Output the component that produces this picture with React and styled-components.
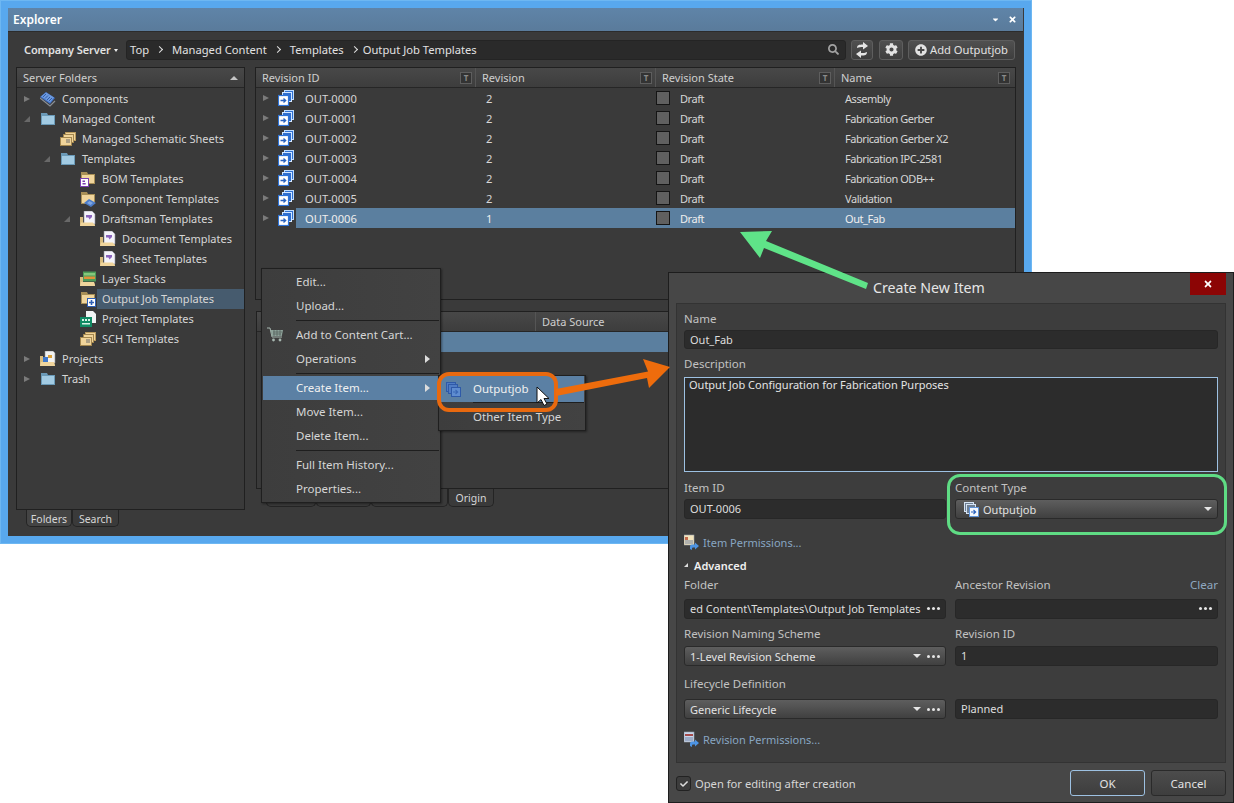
import React from 'react'
import styled, { createGlobalStyle } from 'styled-components'
import { FaCog, FaPlusCircle, FaSearch, FaCaretDown, FaTimes, FaCheck } from 'react-icons/fa'

const GlobalStyle = createGlobalStyle`
  html, body { margin: 0; padding: 0; background: #fff; }
  * { box-sizing: border-box; }
`

const UI_FONT = `"Noto Sans", "Open Sans", sans-serif`

const Stage = styled.div`
  position: relative;
  width: 1234px;
  height: 803px;
  overflow: hidden;
  font-family: ${UI_FONT};
  font-size: 11.5px;
  color: #d6d6d6;
`

/* ---------- icons ---------- */
const Svg = ({ children, size = 16 }) => (
  <svg width={size} height={size} viewBox="0 0 16 16" style={{ display: 'block', flex: 'none' }}>{children}</svg>
)

const ChipIcon = () => (
  <Svg>
    <path d="M0 6 6 1l9 6-5 6z" fill="#3f6fc4" />
    <path d="M1 5.500 6 1.500l8 5-4 5z" fill="#6d9ade" />
    <path d="M3 6l3-3M5 7.500l3-3M7 9l3-3M9 10l3-3" stroke="#2f5aa8" strokeWidth="1" />
    <path d="M0 7l10 8 5-5" stroke="#8a8f96" strokeWidth="1.2" fill="none" />
  </Svg>
)
const BlueFolder = () => (
  <Svg>
    <path d="M1 2h6l1 2h7v10H1z" fill="#6a9ab8" />
    <path d="M2 5h12v8H2z" fill="#a2cbe3" />
  </Svg>
)
const StackFolder = ({ tint = '#f0d49a' }) => (
  <Svg>
    <path d="M5 1h11v9H5z" fill="#b99a5c" />
    <path d="M6 2h9v7H6z" fill={tint} />
    <path d="M3 3h11v9H3z" fill="#a3874f" />
    <path d="M4 4h9v7H4z" fill={tint} />
    <path d="M0 6h12v9H0z" fill="#a3874f" />
    <path d="M1 7h10v7H1z" fill={tint} />
    <path d="M6 9h4M6 11h4" stroke="#6d6d6d" strokeWidth="1" />
  </Svg>
)
const PlainFolder = () => (
  <>
    <path d="M1 1h6l1 2h7v10H1z" fill="#a88f57" />
    <path d="M2 4h12v8H2z" fill="#f0d59c" />
  </>
)
const BomIcon = () => (
  <Svg>
    <PlainFolder />
    <rect x="0.500" y="7.500" width="8" height="8" fill="#fff" stroke="#7a3fb0" />
    <path d="M2.500 9.500h2.500v1.500H2.500zM2.500 12h3.200v1.500h-3.200z" fill="#7a3fb0" />
  </Svg>
)
const CompFolder = () => (
  <Svg>
    <PlainFolder />
    <path d="M4 12l5-4 7 4-5 4z" fill="#4c7cc8" />
    <path d="M7 12l2.500-2 3.500 2-2.500 2z" fill="#7ea6e2" />
  </Svg>
)
const DocFolder = () => (
  <Svg>
    <path d="M0 6h3v7h11l1-3v5H0z" fill="#d9bd80" />
    <path d="M4 0h8l3 3v10H4z" fill="#f4f4fa" stroke="#8d8d9a" strokeWidth=".6" />
    <path d="M6 4h6v2l-2.500 2.500-1-2H6z" fill="#8a64bc" />
    <path d="M1 11.500h12l2 3.500H0z" fill="#f0d59c" />
  </Svg>
)
const LayerFolder = () => (
  <Svg>
    <path d="M0 6h3v8h11l1-3v4H0z" fill="#d9bd80" />
    <rect x="3" y="0.500" width="13" height="10" fill="#4c9a58" />
    <path d="M4 2h11v2.500H4z" fill="#86c77c" />
    <path d="M4 5.500h11V8H4z" fill="#e0913a" />
    <path d="M1 11h13l1 4H0z" fill="#f0d59c" />
  </Svg>
)
const OutputFolder = () => (
  <Svg>
    <PlainFolder />
    <rect x="7.500" y="7.500" width="8" height="8" fill="#fff" stroke="#2f5fb4" />
    <path d="M9 11.500h5M11.500 9v5" stroke="#2f5fb4" strokeWidth="1.6" />
  </Svg>
)
const ProjectTpl = () => (
  <Svg>
    <path d="M6 0h7l3 3v9H6z" fill="#f1f4f4" />
    <rect x="0" y="6" width="12" height="10" fill="#108a63" />
    <path d="M2 8h2v2H2zM5 8h2v2H5zM8 8h2v2H8zM2 12h8v1.500H2z" fill="#d8f2e6" />
  </Svg>
)
const ProjectsIcon = () => (
  <Svg>
    <path d="M0 5h3v8h11v-2l1 4H0z" fill="#d9bd80" />
    <path d="M5 0h8l2 2v10H5z" fill="#f2f2f2" stroke="#8f8f8f" strokeWidth=".6" />
    <path d="M3 6h5v5H3z" fill="#3f78cc" />
    <path d="M8 4h4v3H8z" fill="#d9a03a" />
    <path d="M1 11h13l1 4H0z" fill="#f0d59c" />
  </Svg>
)
const JobIcon = () => (
  <Svg>
    <rect x="6.500" y="0.500" width="9" height="9" fill="#2f6fd0" stroke="#bcdcff" />
    <rect x="4.500" y="2.500" width="9" height="9" fill="#2f6fd0" stroke="#d4e8ff" />
    <rect x="0.500" y="5.500" width="10" height="10" fill="#fff" stroke="#2f74d8" strokeWidth="1.2" />
    <path d="M2.500 10.500h5M5.500 8.500l2.200 2-2.200 2" stroke="#2a62be" strokeWidth="1.3" fill="none" />
  </Svg>
)
const StackDownIcon = ({ dim }) => (
  <Svg>
    <rect x="1.500" y="1.500" width="9" height="9" fill={dim ? '#4f7cc4' : '#6f7f92'} stroke={dim ? '#2f5aa8' : '#d6e4f4'} />
    <rect x="3.500" y="3.500" width="9" height="9" fill={dim ? '#4f7cc4' : '#6f7f92'} stroke={dim ? '#2f5aa8' : '#d6e4f4'} />
    <rect x="6.500" y="6.500" width="9" height="9" fill={dim ? '#5f8dd0' : '#f4f8fd'} stroke={dim ? '#2f5aa8' : '#5f93d8'} />
    <path d="M8 11h4.500M10.500 9l2.200 2-2.200 2" stroke={dim ? '#3a68b4' : '#2a62be'} strokeWidth="1.1" fill="none" />
  </Svg>
)
const PermIcon = ({ table }) => (
  <Svg>
    <rect x="0" y="1" width="10" height="10" fill={table ? '#c7d6ec' : '#f2e4bd'} stroke="#99a0aa" strokeWidth=".6" />
    <path d={table ? 'M1 3h8v2H1z' : 'M1 3h3v3H1z'} fill={table ? '#a44a4a' : '#c46a4a'} />
    <path d="M1 7h8M1 9h8" stroke="#6f7f9f" strokeWidth="1" />
    <path d="M6 15v-2.500a2 2 0 0 1 2-2h3V8.500l4 3.500-4 3.500v-2H9a1 1 0 0 0-1 1v1.500z" fill="#4d94e4" />
  </Svg>
)
const CartIcon = () => (
  <svg width="17" height="16" viewBox="0 0 17 16" style={{ display: 'block' }}>
    <path d="M0 1h3l2 9h10" stroke="#a7b7b0" strokeWidth="1" fill="none" />
    <path d="M3.500 3H16l-1.200 6H5z" fill="#8ea39a" />
    <path d="M6 5h9M6 7h8M7 3v6M10 3v6M13 3v6" stroke="#4c5652" strokeWidth=".6" />
    <circle cx="6.500" cy="13" r="1.400" fill="#a7b7b0" />
    <circle cx="13" cy="13" r="1.400" fill="#a7b7b0" />
  </svg>
)
const SwapIcon = () => (
  <svg width="14" height="16" viewBox="0 0 14 16" style={{ display: 'block' }}>
    <path d="M2 6C2 3 4 2.500 8 2.500V0l5 4-5 3.500V5C5.500 5 4 5 2 6z" fill="#e6e6e6" />
    <path d="M12 10c0 3-2 3.500-6 3.500V16L1 12l5-3.500V11c2.500 0 4 0 6-1z" fill="#e6e6e6" />
  </svg>
)

/* ---------- explorer window ---------- */
const ExplorerWindow = styled.section`
  position: absolute;
  left: 0;
  top: 0;
  width: 1032px;
  height: 544px;
  background: #3a3a3a;
  border: 1px solid #6db7f2;
  padding: 7px 8px 8px 7px;
  box-shadow: inset 0 0 0 7px #58a8ee;
  display: flex;
  flex-direction: column;
`
const TitleBar = styled.header`
  height: 23px;
  flex: none;
  background: linear-gradient(#5f84a8, #5a7b9b);
  display: flex;
  align-items: center;
  justify-content: space-between;
  padding: 0 6px 0 5px;
  font-size: 12px;
  font-weight: 600;
  color: #fff;
`
const TitleButtons = styled.div`
  display: flex;
  align-items: center;
  gap: 8px;
  font-size: 9px;
`
const ExplorerBody = styled.div`
  flex: 1;
  min-height: 0;
  background: #3a3a3a;
  padding: 7px 8px 0 8px;
  display: flex;
  flex-direction: column;
  border-top: 1px solid #2c2c2c;
`
const Toolbar = styled.div`
  display: flex;
  align-items: center;
  height: 21px;
  margin-bottom: 7px;
`
const ServerPicker = styled.div`
  width: 110px;
  padding-left: 8px;
  display: flex;
  align-items: center;
  gap: 3px;
  font-weight: 600;
  color: #e2e2e2;
  font-size: 11px;
  letter-spacing: -0.1px;
  white-space: nowrap;
`
const TinyCaret = styled.span`
  width: 0;
  height: 0;
  border: 2.5px solid transparent;
  border-top: 3px solid #eee;
  margin-top: 3px;
`
const PathBox = styled.div`
  flex: 1;
  height: 20px;
  background: #2a2a2a;
  border: 1px solid #242424;
  border-radius: 3px;
  display: flex;
  align-items: center;
  padding: 0 6px 0 3px;
  color: #e2e2e2;
  font-size: 11.2px;
`
const Chevron = styled.span`
  width: 5px;
  height: 5px;
  border: solid #e2e2e2;
  border-width: 1.5px 1.5px 0 0;
  transform: rotate(45deg);
  margin: 0 ${p => p.$after || 10}px 0 8px;
`
const SearchSlot = styled.span`
  margin-left: auto;
  color: #a2a2a2;
  font-size: 11px;
  display: flex;
`
const ToolButton = styled.button`
  font: inherit;
  color: #e2e2e2;
  height: 20px;
  width: ${p => p.$w}px;
  margin-left: ${p => p.$gap || 5}px;
  border: 1px solid #5e5e5e;
  border-radius: 3px;
  background: linear-gradient(#505050, #3e3e3e);
  display: flex;
  align-items: center;
  justify-content: center;
  gap: 3px;
  padding: 0;
  font-size: 11.2px;
  white-space: nowrap;
`
const Main = styled.div`
  flex: 1;
  display: grid;
  grid-template-columns: 229px 761px;
  column-gap: 10px;
  min-height: 0;
`
const Column = styled.div`
  display: flex;
  flex-direction: column;
`
const Panel = styled.div`
  border: 1px solid #202020;
  background: #3a3a3a;
  height: ${p => p.$h}px;
  margin-top: ${p => p.$top || 0}px;
  margin-left: ${p => p.$left || 0}px;
  flex: none;
  overflow: hidden;
`
const PanelHeader = styled.div`
  height: 20px;
  background: linear-gradient(#484848, #3d3d3d);
  border-bottom: 1px solid #262626;
  display: flex;
  align-items: center;
  justify-content: space-between;
  padding: 0 6px;
  color: #cfcfcf;
  font-size: 11px;
`
const SortUp = styled.span`
  width: 0;
  height: 0;
  border: 4px solid transparent;
  border-bottom: 4px solid #c5c5c5;
  border-top: 0;
`
const Tree = styled.div`
  padding-top: 1px;
  font-size: 11px;
`
const TreeRow = styled.div`
  height: 20px;
  display: flex;
  align-items: center;
  padding-left: ${p => 7 + p.$level * 20}px;
`
const CaretBox = styled.span`
  width: 16px;
  flex: none;
  display: flex;
  align-items: center;
`
const RowCaretBox = styled(CaretBox)`
  width: 15px;
`
const Caret = styled.span`
  width: 0;
  height: 0;
  ${p => p.$open
    ? `border-left: 6px solid transparent; border-bottom: 6px solid #686868;`
    : `border-top: 3.5px solid transparent; border-bottom: 3.5px solid transparent; border-left: 6px solid #7a7a7a;`}
`
const TreeLabel = styled.span`
  margin-left: 1px;
  padding: 0 0 0 5px;
  height: 20px;
  line-height: 20px;
  white-space: nowrap;
  flex: ${p => (p.$selected ? 1 : 'none')};
  background: ${p => (p.$selected ? '#465b6e' : 'transparent')};
`
const TabStrip = styled.div`
  display: flex;
  padding-left: ${p => p.$left}px;
  height: ${p => p.$h}px;
`
const Tab = styled.div`
  width: ${p => p.$w}px;
  height: 100%;
  background: ${p => (p.$active ? '#444' : '#3a3a3a')};
  border: 1px solid #242424;
  border-top: 0;
  border-radius: 0 0 5px 5px;
  text-align: center;
  line-height: ${p => p.$h + 1}px;
  color: #d6d6d6;
  font-size: 10.5px;
`
const GridHeader = styled(PanelHeader)`
  display: grid;
  grid-template-columns: ${p => p.$cols};
  padding: 0;
`
const HeadCell = styled.div`
  height: 19px;
  display: flex;
  align-items: center;
  justify-content: space-between;
  padding: 0 ${p => (p.$last ? 5 : 3)}px 0 6px;
  border-right: ${p => (p.$last ? 0 : '1px solid #555')};
`
const FilterBox = styled.span`
  width: 12px;
  height: 12px;
  border: 1px solid #5e5e5e;
  background: #333;
  color: #8a8a8a;
  font-size: 8px;
  font-weight: 700;
  line-height: 10px;
  text-align: center;
`
const ItemList = styled.div`
  font-size: 11.2px;
`
const GridRow = styled.div`
  height: 20px;
  display: flex;
  align-items: center;
`
const RowLead = styled.div`
  width: 40px;
  flex: none;
  display: flex;
  align-items: center;
  padding-left: 7px;
`
const RowCells = styled.div`
  flex: 1;
  height: 20px;
  display: grid;
  grid-template-columns: 179px 180px 179px 1fr;
  align-items: center;
  background: ${p => (p.$selected ? '#5b7f9f' : 'transparent')};
  color: ${p => (p.$selected ? '#eee' : '#d6d6d6')};
`
const Cell = styled.div`
  padding-left: ${p => p.$pad}px;
  display: flex;
  align-items: center;
  white-space: nowrap;
`
const TightCell = styled(Cell)`
  font-size: 11px;
  letter-spacing: -0.45px;
`
const StateBox = styled.span`
  width: 14px;
  height: 14px;
  background: #606060;
  border: 1px solid #151515;
  margin-right: 10px;
`
const SelectedStrip = styled.div`
  height: 20px;
  margin-left: 39px;
  background: #5b7f9f;
`

/* ---------- context menu ---------- */
const Menu = styled.div`
  position: absolute;
  left: ${p => p.$x}px;
  top: ${p => p.$y}px;
  width: ${p => p.$w}px;
  background: linear-gradient(90deg, #3d3d3d, #424242);
  border: 1px solid #1f1f1f;
  padding: 1px;
  box-shadow: 1px 1px 2px rgba(0, 0, 0, .4);
`
const SubMenu = styled(Menu)`
  padding: 0 1px;
`
const MenuItem = styled.div`
  position: relative;
  height: ${p => p.$h || 24}px;
  display: flex;
  align-items: center;
  padding: 0 0 ${p => (p.$pb === undefined ? 2 : p.$pb)}px ${p => p.$indent || 33}px;
  background: ${p => (p.$active ? '#5b80a4' : 'transparent')};
  color: ${p => (p.$active ? '#f0f0f0' : '#d6d6d6')};
  white-space: nowrap;
`
const MenuIcon = styled.span`
  position: absolute;
  left: ${p => p.$left}px;
  top: 50%;
  transform: translateY(-50%);
`
const MenuArrow = styled.span`
  position: absolute;
  right: 9px;
  top: 50%;
  margin-top: -4px;
  border: 4px solid transparent;
  border-left: 5px solid #ddd;
  border-right: 0;
`
const MenuSep = styled.div`
  height: ${p => p.$h || 5}px;
  margin-left: 33px;
  display: flex;
  align-items: center;
  &::after {
    content: '';
    height: 1px;
    flex: 1;
    background: #1e1e1e;
  }
`

/* ---------- dialog ---------- */
const Dialog = styled.section`
  position: absolute;
  left: 668px;
  top: 272px;
  width: 566px;
  height: 531px;
  background: #474747;
  border: 1px solid #1d1d1d;
  display: flex;
  flex-direction: column;
`
const DialogTitle = styled.header`
  height: 30px;
  flex: none;
  padding: 4px 0 0 204px;
  font-size: 14.2px;
  line-height: 22px;
  color: #e6e6e6;
`
const CloseButton = styled.div`
  position: absolute;
  right: 7px;
  top: 0;
  width: 36px;
  height: 22px;
  background: #8c0505;
  color: #fff;
  font-size: 10px;
  display: flex;
  align-items: center;
  justify-content: center;
`
const DialogPanel = styled.div`
  margin: 0 7px;
  height: 460px;
  flex: none;
  background: #3d3d3d;
  border: 1px solid #333;
  padding: 7px 7px 0 7px;
`
const TwoCols = styled.div`
  display: grid;
  grid-template-columns: 262px 263px;
  column-gap: 9px;
  margin-top: ${p => p.$top || 0}px;
`
const Field = styled.div`
  margin-top: ${p => p.$top || 0}px;
`
const FieldLabel = styled.div`
  height: 16px;
  line-height: 16px;
  color: #c2c2c2;
  margin-bottom: ${p => (p.$gap === undefined ? 3 : p.$gap)}px;
  display: flex;
  justify-content: space-between;
`
const Input = styled.div`
  height: ${p => p.$h || 20}px;
  background: #2c2c2c;
  border: 1px solid #272727;
  border-radius: 3px;
  display: flex;
  align-items: center;
  padding: 0 5px 1px;
  color: #dedede;
  font-size: 11px;
  white-space: nowrap;
  overflow: hidden;
`
const TextArea = styled.div`
  height: 95px;
  background: #2c2c2c;
  border: 1px solid #9dc1e2;
  padding: 0 4px;
  line-height: 14px;
  font-size: 11px;
  color: #e4e4e4;
`
const SelectBox = styled.div`
  height: 20px;
  background: linear-gradient(#5e5e5e, #404040);
  border: 1px solid #2a2a2a;
  border-radius: 3px;
  display: flex;
  align-items: center;
  gap: 4px;
  padding: 0 5px;
  font-size: 11px;
  color: #e2e2e2;
`
const IconSlot = styled.span`
  margin-left: 2px;
`
const DownCaret = styled.span`
  margin-left: auto;
  width: 0;
  height: 0;
  border: 4px solid transparent;
  border-top: 4px solid #e6e6e6;
  border-bottom: 0;
`
const Dots = styled.span`
  margin-left: ${p => (p.$auto ? 'auto' : '2px')};
  display: flex;
  gap: 2px;
  flex: none;
  & > i {
    width: 3px;
    height: 3px;
    border-radius: 50%;
    background: #e6e6e6;
  }
`
const More = ({ auto }) => <Dots $auto={auto}><i /><i /><i /></Dots>
const LinkRow = styled.div`
  height: 16px;
  margin-top: ${p => p.$top}px;
  display: flex;
  align-items: center;
  gap: 3px;
  font-size: 11px;
  color: #88a6c2;
`
const SectionToggle = styled.div`
  height: 16px;
  margin-top: 7px;
  display: flex;
  align-items: center;
  gap: 6px;
  color: #f0f0f0;
  font-size: 11px;
  font-weight: 600;
`
const SmallOpen = styled.span`
  width: 0;
  height: 0;
  border-left: 4px solid transparent;
  border-bottom: 4px solid #ddd;
`
const ClearLink = styled.span`
  color: #8fa8c0;
`
const DialogFooter = styled.footer`
  flex: 1;
  display: flex;
  align-items: flex-start;
  padding: 7px 7px 0 7px;
`
const CheckRow = styled.label`
  display: flex;
  align-items: center;
  gap: 4px;
  margin-top: 6px;
  font-size: 11.2px;
`
const CheckBox = styled.span`
  width: 15px;
  height: 15px;
  background: #3c3c3c;
  border: 1px solid #222;
  border-radius: 3px;
  color: #ddd;
  font-size: 8px;
  display: flex;
  align-items: center;
  justify-content: center;
`
const DialogButton = styled.button`
  font: inherit;
  color: #e2e2e2;
  width: 75px;
  height: 26px;
  border-radius: 3px;
  margin-left: ${p => (p.$auto ? 'auto' : '6px')};
  background: linear-gradient(#4c4c4c, #3e3e3e);
  border: 1px solid ${p => (p.$primary ? '#9dc1e2' : '#2a2a2a')};
`

/* ---------- callouts over the page ---------- */
const Callout = styled.div`
  position: absolute;
  left: ${p => p.$x}px;
  top: ${p => p.$y}px;
  width: ${p => p.$w}px;
  height: ${p => p.$h}px;
  border: ${p => p.$b}px solid ${p => p.$color};
  border-radius: ${p => p.$r}px;
`
const ArrowLayer = styled.svg`
  position: absolute;
  left: 0;
  top: 0;
  pointer-events: none;
`

const TREE = [
  { level: 0, caret: 'closed', Icon: ChipIcon, label: 'Components' },
  { level: 0, caret: 'open', Icon: BlueFolder, label: 'Managed Content' },
  { level: 1, Icon: StackFolder, label: 'Managed Schematic Sheets' },
  { level: 1, caret: 'open', Icon: BlueFolder, label: 'Templates' },
  { level: 2, Icon: BomIcon, label: 'BOM Templates' },
  { level: 2, Icon: CompFolder, label: 'Component Templates' },
  { level: 2, caret: 'open', Icon: DocFolder, label: 'Draftsman Templates' },
  { level: 3, Icon: DocFolder, label: 'Document Templates' },
  { level: 3, Icon: DocFolder, label: 'Sheet Templates' },
  { level: 2, Icon: LayerFolder, label: 'Layer Stacks' },
  { level: 2, Icon: OutputFolder, label: 'Output Job Templates', selected: true },
  { level: 2, Icon: ProjectTpl, label: 'Project Templates' },
  { level: 2, Icon: StackFolder, label: 'SCH Templates' },
  { level: 0, caret: 'closed', Icon: ProjectsIcon, label: 'Projects' },
  { level: 0, caret: 'closed', Icon: BlueFolder, label: 'Trash' },
]

const ITEMS = [
  ['OUT-0000', '2', 'Assembly'],
  ['OUT-0001', '2', 'Fabrication Gerber'],
  ['OUT-0002', '2', 'Fabrication Gerber X2'],
  ['OUT-0003', '2', 'Fabrication IPC-2581'],
  ['OUT-0004', '2', 'Fabrication ODB++'],
  ['OUT-0005', '2', 'Validation'],
  ['OUT-0006', '1', 'Out_Fab'],
]

const HEADERS = ['Revision ID', 'Revision', 'Revision State', 'Name']

const Explorer = () => (
  <ExplorerWindow>
    <TitleBar>
      Explorer
      <TitleButtons><FaCaretDown /><FaTimes /></TitleButtons>
    </TitleBar>
    <ExplorerBody>
      <Toolbar>
        <ServerPicker>Company Server <TinyCaret /></ServerPicker>
        <PathBox>
          Top<Chevron />Managed Content<Chevron />Templates<Chevron $after={6} />Output Job Templates
          <SearchSlot><FaSearch /></SearchSlot>
        </PathBox>
        <ToolButton $w={22}><SwapIcon /></ToolButton>
        <ToolButton $w={24} $gap={6}><FaCog size={13} /></ToolButton>
        <ToolButton $w={107}><FaPlusCircle size={12} />Add Outputjob</ToolButton>
      </Toolbar>
      <Main>
        <Column>
          <Panel $h={443}>
            <PanelHeader>Server Folders<SortUp /></PanelHeader>
            <Tree>
              {TREE.map(({ level, caret, Icon, label, selected }) => (
                <TreeRow key={label} $level={level}>
                  <CaretBox>{caret && <Caret $open={caret === 'open'} />}</CaretBox>
                  <Icon />
                  <TreeLabel $selected={selected}>{label}</TreeLabel>
                </TreeRow>
              ))}
            </Tree>
          </Panel>
          <TabStrip $left={10} $h={17}>
            <Tab $w={46} $h={17} $active>Folders</Tab>
            <Tab $w={47} $h={17}>Search</Tab>
          </TabStrip>
        </Column>
        <Column>
          <Panel $h={233}>
            <GridHeader $cols="220px 180px 179px 180px">
              {HEADERS.map((h, i) => (
                <HeadCell key={h} $last={i === 3}>{h}<FilterBox>T</FilterBox></HeadCell>
              ))}
            </GridHeader>
            <ItemList>
              {ITEMS.map(([id, rev, name]) => (
                <GridRow key={id}>
                  <RowLead>
                    <RowCaretBox><Caret /></RowCaretBox>
                    <JobIcon />
                  </RowLead>
                  <RowCells $selected={id === 'OUT-0006'}>
                    <Cell $pad={9}>{id}</Cell>
                    <Cell $pad={11}>{rev}</Cell>
                    <TightCell $pad={1}><StateBox />Draft</TightCell>
                    <TightCell $pad={11}>{name}</TightCell>
                  </RowCells>
                </GridRow>
              ))}
            </ItemList>
          </Panel>
          <Panel $h={178} $top={11} $left={1}>
            <GridHeader $cols="279px 1fr">
              <HeadCell />
              <HeadCell $last>Data Source</HeadCell>
            </GridHeader>
            <SelectedStrip />
          </Panel>
          <TabStrip $left={11} $h={18}>
            <Tab $w={50} $h={18} />
            <Tab $w={55} $h={18} />
            <Tab $w={77} $h={18} />
            <Tab $w={46} $h={18}>Origin</Tab>
          </TabStrip>
        </Column>
      </Main>
    </ExplorerBody>
  </ExplorerWindow>
)

const ContextMenu = () => (
  <>
    <Menu $x={261} $y={268} $w={180}>
      <MenuItem>Edit...</MenuItem>
      <MenuItem>Upload...</MenuItem>
      <MenuSep />
      <MenuItem><MenuIcon $left={4}><CartIcon /></MenuIcon>Add to Content Cart...</MenuItem>
      <MenuItem>Operations<MenuArrow /></MenuItem>
      <MenuSep />
      <MenuItem $active>Create Item...<MenuArrow /></MenuItem>
      <MenuItem>Move Item...</MenuItem>
      <MenuItem>Delete Item...</MenuItem>
      <MenuSep />
      <MenuItem>Full Item History...</MenuItem>
      <MenuItem>Properties...</MenuItem>
    </Menu>
    <SubMenu $x={438} $y={375} $w={148}>
      <MenuItem $active $h={26} $indent={33}>
        <MenuIcon $left={5}><StackDownIcon dim /></MenuIcon>Outputjob
      </MenuItem>
      <MenuSep $h={1} />
      <MenuItem $h={27} $pb={0} $indent={33}>Other Item Type</MenuItem>
    </SubMenu>
  </>
)

const CreateDialog = () => (
  <Dialog>
    <DialogTitle>Create New Item</DialogTitle>
    <CloseButton><FaTimes /></CloseButton>
    <DialogPanel>
      <Field>
        <FieldLabel>Name</FieldLabel>
        <Input $h={19}>Out_Fab</Input>
      </Field>
      <Field $top={7}>
        <FieldLabel $gap={5}>Description</FieldLabel>
        <TextArea>Output Job Configuration for Fabrication Purposes</TextArea>
      </Field>
      <TwoCols $top={8}>
        <Field>
          <FieldLabel>Item ID</FieldLabel>
          <Input>OUT-0006</Input>
        </Field>
        <Field>
          <FieldLabel>Content Type</FieldLabel>
          <SelectBox><IconSlot><StackDownIcon /></IconSlot>Outputjob<DownCaret /></SelectBox>
        </Field>
      </TwoCols>
      <LinkRow $top={15}><PermIcon />Item Permissions...</LinkRow>
      <SectionToggle><SmallOpen />Advanced</SectionToggle>
      <TwoCols $top={4}>
        <Field>
          <FieldLabel $gap={6}>Folder</FieldLabel>
          <Input>ed Content\Templates\Output Job Templates<More auto /></Input>
        </Field>
        <Field>
          <FieldLabel $gap={6}>Ancestor Revision<ClearLink>Clear</ClearLink></FieldLabel>
          <Input><More auto /></Input>
        </Field>
      </TwoCols>
      <TwoCols $top={7}>
        <Field>
          <FieldLabel $gap={4}>Revision Naming Scheme</FieldLabel>
          <SelectBox>1-Level Revision Scheme<DownCaret /><More /></SelectBox>
        </Field>
        <Field>
          <FieldLabel $gap={4}>Revision ID</FieldLabel>
          <Input>1</Input>
        </Field>
      </TwoCols>
      <TwoCols $top={10}>
        <Field>
          <FieldLabel $gap={7}>Lifecycle Definition</FieldLabel>
          <SelectBox>Generic Lifecycle<DownCaret /><More /></SelectBox>
        </Field>
        <Field>
          <FieldLabel $gap={7}>&nbsp;</FieldLabel>
          <Input>Planned</Input>
        </Field>
      </TwoCols>
      <LinkRow $top={12}><PermIcon table />Revision Permissions...</LinkRow>
    </DialogPanel>
    <DialogFooter>
      <CheckRow><CheckBox><FaCheck /></CheckBox>Open for editing after creation</CheckRow>
      <DialogButton $auto $primary>OK</DialogButton>
      <DialogButton>Cancel</DialogButton>
    </DialogFooter>
  </Dialog>
)

const Annotations = () => (
  <>
    <Callout $x={437} $y={372} $w={121} $h={40} $b={4} $r={12} $color="#e8690f" />
    <Callout $x={947} $y={474} $w={280} $h={61} $b={3} $r={13} $color="#5fdc84" />
    <ArrowLayer width="1234" height="803" viewBox="0 0 1234 803">
      <path d="M556 389 648 371.500 643 359 670 367 649 388 647 378 556 396z" fill="#ee6c0c" />
      <path d="M868 283 766 241 772 231 740 232 760 258 764 248 866 289z" fill="#5fe388" />
      <path d="M537 387v16l4-3.500 3 6 3-1.500-3-5.500h5z" fill="#fff" stroke="#111" strokeWidth="1" />
    </ArrowLayer>
  </>
)

const App = () => (
  <Stage>
    <GlobalStyle />
    <Explorer />
    <ContextMenu />
    <CreateDialog />
    <Annotations />
  </Stage>
)

export default App
